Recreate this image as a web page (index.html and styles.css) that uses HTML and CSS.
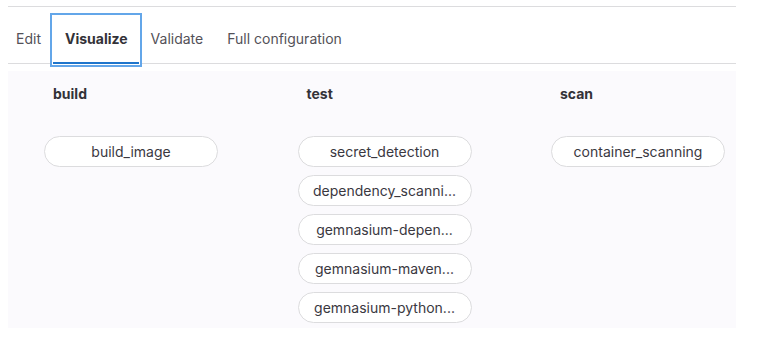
FILE: index.html
```html
<!DOCTYPE html>
<html lang="en">
<head>
  <meta charset="UTF-8" />
  <meta name="viewport" content="width=device-width, initial-scale=1.0"/>
  <title>Pipeline editor</title>
  <link rel="stylesheet" href="styles.css">
</head>
<body>
  <div class="editor">
    <ul class="tabs">
      <li class="tab">Edit</li>
      <li class="tab active">Visualize</li>
      <li class="tab">Validate</li>
      <li class="tab">Full configuration</li>
    </ul>

    <div class="graph">
      <div class="stage">
        <div class="stage-name">build</div>
        <div class="jobs">
          <div class="job">build_image</div>
        </div>
      </div>

      <div class="stage">
        <div class="stage-name">test</div>
        <div class="jobs">
          <div class="job">secret_detection</div>
          <div class="job">dependency_scanni...</div>
          <div class="job">gemnasium-depen...</div>
          <div class="job">gemnasium-maven...</div>
          <div class="job">gemnasium-python...</div>
        </div>
      </div>

      <div class="stage">
        <div class="stage-name">scan</div>
        <div class="jobs">
          <div class="job">container_scanning</div>
        </div>
      </div>
    </div>
  </div>
</body>
</html>
```

FILE: styles.css
```css
body {
  margin: 0;
  font-family: Inter, "Noto Sans", sans-serif;
  font-size: 14px;
  color: #333238;
  background: #fff;
}

.editor {
  width: 728px;
  margin: 6px 0 0 8px;
  border-top: 1px solid #dcdcde;
}

.tabs {
  display: flex;
  list-style: none;
  margin: 9px 0 0 0;
  padding: 0;
  border-bottom: 1px solid #dcdcde;
}

.tab {
  height: 48px;
  line-height: 46px;
  padding: 0 12px;
  margin-bottom: -1px;
  color: #535158;
  white-space: nowrap;
}

.tab:first-child {
  margin-left: -4px;
}

.tab.active {
  padding: 0 11px 0 12px;
  font-weight: 700;
  color: #333238;
  box-shadow: inset 0 -2px 0 #1f75cb, 0 0 0 1px #fff, 0 0 0 3px #63a6e9;
}

.graph {
  display: grid;
  grid-template-columns: repeat(3, 253.5px);
  margin-top: 7px;
  padding: 13px 0 5px 0;
  background: #fbfafd;
  overflow: hidden;
}

.stage {
  padding-left: 36px;
}

.stage-name {
  padding-left: 9px;
  line-height: 20px;
  font-weight: 700;
  color: #333238;
}

.jobs {
  display: flex;
  flex-direction: column;
  gap: 8px;
  margin-top: 32px;
}

.job {
  box-sizing: border-box;
  width: 174px;
  height: 31px;
  line-height: 29px;
  padding: 0 12px;
  border: 1px solid #dcdcde;
  border-radius: 16px;
  background: #fff;
  color: #3a383f;
  text-align: center;
  white-space: nowrap;
  overflow: hidden;
}
```
